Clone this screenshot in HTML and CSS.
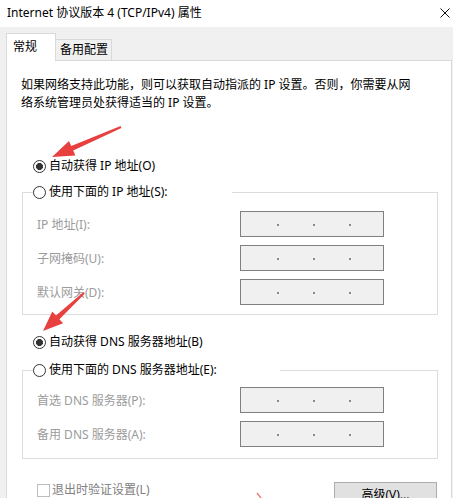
FILE: index.html
```html
<!DOCTYPE html>
<html lang="zh-CN">
<head>
<meta charset="utf-8">
<title>Internet 协议版本 4 (TCP/IPv4) 属性</title>
<link rel="stylesheet" href="styles.css">
</head>
<body>
<div class="window">
  <div class="titlebar">
    <span class="title">Internet 协议版本 4 (TCP/IPv4) 属性</span>
    <svg class="close" width="10" height="10" viewBox="0 0 10 10"><path d="M0.5 0.5 L9.5 9.5 M9.5 0.5 L0.5 9.5" stroke="#111" stroke-width="1" fill="none"/></svg>
  </div>
  <div class="client">
    <div class="tabs">
      <div class="tab active">常规</div>
      <div class="tab">备用配置</div>
    </div>
    <div class="panel">
      <p class="desc">如果网络支持此功能，则可以获取自动指派的 IP 设置。否则，你需要从网<br>络系统管理员处获得适当的 IP 设置。</p>

      <div class="option first"><span class="radio checked"></span>自动获得 IP 地址(O)</div>

      <fieldset class="group g1">
        <legend class="option legend-ip"><span class="radio"></span>使用下面的 IP 地址(S):</legend>
        <div class="field"><span class="lbl">IP 地址(I):</span><div class="ipbox"><i></i><i></i><i></i></div></div>
        <div class="field"><span class="lbl">子网掩码(U):</span><div class="ipbox"><i></i><i></i><i></i></div></div>
        <div class="field"><span class="lbl">默认网关(D):</span><div class="ipbox"><i></i><i></i><i></i></div></div>
      </fieldset>

      <div class="option third"><span class="radio checked"></span>自动获得 DNS 服务器地址(B)</div>

      <fieldset class="group g2">
        <legend class="option legend-dns"><span class="radio"></span>使用下面的 DNS 服务器地址(E):</legend>
        <div class="field"><span class="lbl">首选 DNS 服务器(P):</span><div class="ipbox"><i></i><i></i><i></i></div></div>
        <div class="field"><span class="lbl">备用 DNS 服务器(A):</span><div class="ipbox"><i></i><i></i><i></i></div></div>
      </fieldset>

      <div class="bottom">
        <div class="check"><span class="box"></span>退出时验证设置(L)</div>
        <div class="button">高级(V)...</div>
      </div>
    </div>
  </div>
  <svg class="marks" width="453" height="498" viewBox="0 0 453 498">
    <polygon fill="#e8403f" points="52,157 75.4,155.5 73.2,150.5 121.4,127.9 120.6,126.1 71.2,145.9 69,140.9"/>
    <polygon fill="#e8403f" points="43,331 63.1,323.3 59.4,319.2 84.7,293.7 83.3,292.3 56,315.6 52.3,311.5"/>
    <path d="M257 493 L261 498" stroke="#f08080" stroke-width="1.5" fill="none"/>
  </svg>
</div>
</body>
</html>
```
FILE: styles.css
```css
* { box-sizing: border-box; }
html, body { margin: 0; padding: 0; }
body {
  width: 453px;
  height: 498px;
  overflow: hidden;
  background: #f0f0f0;
  font-family: "Noto Sans", "Noto Sans CJK SC", sans-serif;
  font-size: 12px;
  color: #000;
}
.window {
  position: relative;
  width: 453px;
  height: 498px;
  overflow: hidden;
}
.titlebar {
  height: 27px;
  background: #fff;
  display: flex;
  align-items: center;
  justify-content: space-between;
  padding: 0 3px 1px 7px;
}
.title { line-height: 16px; }
.close { display: block; margin-top: -1px; }

.client { padding: 0 1px 0 6px; }
.tabs {
  height: 34px;
  display: flex;
  align-items: flex-end;
}
.tab {
  line-height: 16px;
  border: 1px solid #d9d9d9;
  border-bottom: none;
  background: #f0f0f0;
}
.tab.active {
  position: relative;
  z-index: 1;
  width: 50px;
  height: 28px;
  padding: 5px 0 0 6px;
  background: #fff;
}
.tab:not(.active) {
  width: 56px;
  height: 21px;
  margin-bottom: 1px;
  margin-left: 0;
  border-left: none;
  padding: 2px 0 0 4px;
}
.panel {
  margin-top: -1px;
  height: 480px;
  background: #fff;
  border: 1px solid #d9d9d9;
  padding: 15px 0 0 0;
}
.desc {
  margin: 0 0 0 14px;
  line-height: 18px;
}
.option {
  height: 20px;
  line-height: 20px;
  display: flex;
  align-items: center;
  white-space: nowrap;
}
.option.first { margin: 44px 0 0 26px; }
.option.third { margin: 17px 0 0 26px; }
.radio {
  width: 13px;
  height: 13px;
  border: 1px solid #333;
  border-radius: 50%;
  background: #fff;
  margin-right: 3px;
  flex: none;
}
.radio.checked {
  background: radial-gradient(circle, #333 0 3.2px, #fff 3.8px);
}
.group {
  border: 1px solid #dcdcdc;
  margin: 0 13px 0 15px;
  min-width: 0;
}
.g1 { margin-top: 6px; padding: 9px 0 9px 10px; }
.g2 { margin-top: 8px; padding: 7px 0 11px 10px; }
.legend-ip, .legend-dns { padding: 0; background: #fff; }
.legend-ip { width: 199px; }
.legend-dns { width: 247px; }
.field {
  display: flex;
  align-items: center;
  height: 26px;
  padding-left: 4px;
}
.field + .field { margin-top: 8px; }
.lbl {
  flex: 0 0 203px;
  color: #9b9b9b;
  white-space: nowrap;
}
.ipbox {
  width: 144px;
  height: 26px;
  border: 1px solid #808080;
  background: #f0f0f0;
  display: flex;
  align-items: center;
  padding: 2px 0 0 36px;
}
.ipbox i {
  display: block;
  width: 2px;
  height: 2px;
  background: #8a8a8a;
}
.ipbox i + i { margin-left: 34px; }
.bottom {
  margin: 23px 14px 0 15px;
  display: flex;
  justify-content: space-between;
  align-items: flex-start;
}
.check {
  display: flex;
  align-items: center;
  line-height: 16px;
  padding-left: 15px;
  color: #808080;
  white-space: nowrap;
}
.check .box {
  width: 13px;
  height: 13px;
  border: 1px solid #bdbdbd;
  background: #fff;
  margin-right: 2px;
}
.button {
  width: 103px;
  height: 26px;
  background: #e1e1e1;
  border: 1px solid #adadad;
  text-align: center;
  line-height: 24px;
}
.marks {
  position: absolute;
  left: 0;
  top: 0;
  pointer-events: none;
}
```
